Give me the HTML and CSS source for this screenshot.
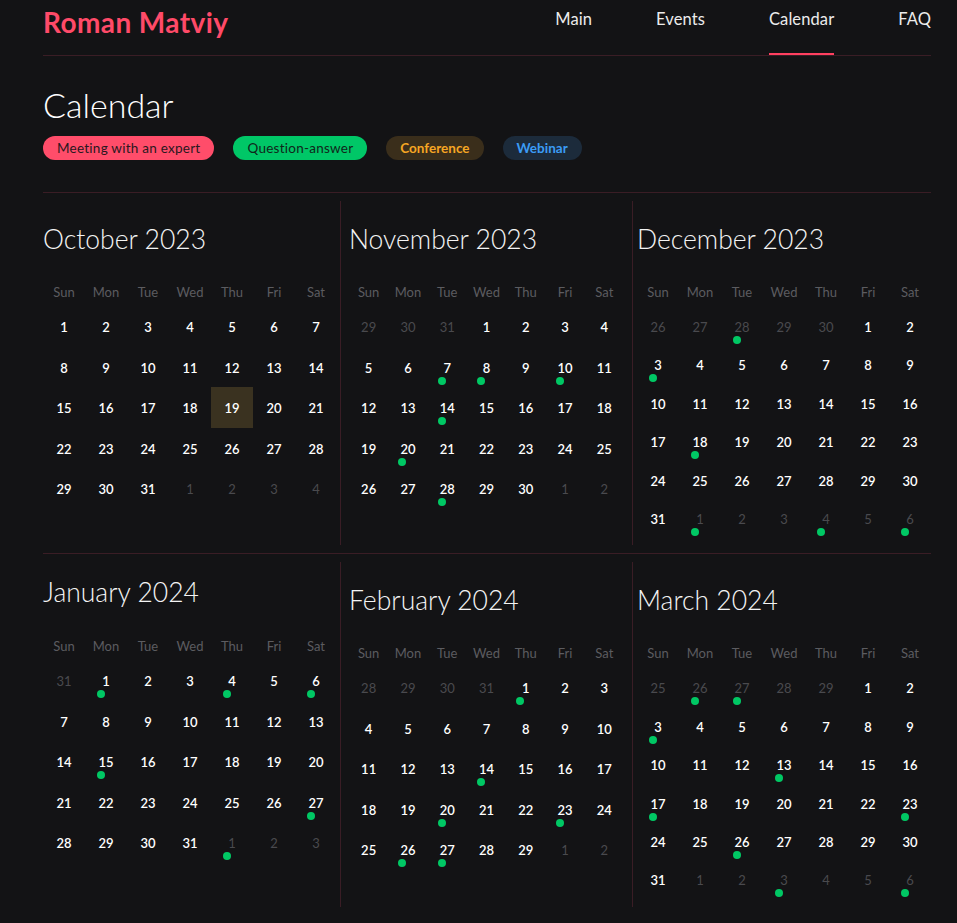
FILE: index.html
```html
<!DOCTYPE html>
<html lang="en">
<head>
<meta charset="utf-8">
<title>Calendar — Roman Matviy</title>
<link rel="stylesheet" href="styles.css">
</head>
<body>
<div class="page">
  <header class="header">
    <a class="logo" href="#">Roman Matviy</a>
    <nav class="nav">
      <a class="nav-link" href="#">Main</a>
      <a class="nav-link" href="#">Events</a>
      <a class="nav-link active" href="#">Calendar</a>
      <a class="nav-link" href="#">FAQ</a>
    </nav>
  </header>

  <h1 class="page-title">Calendar</h1>
  <div class="legend">
    <span class="pill pill-meeting">Meeting with an expert</span>
    <span class="pill pill-qa">Question-answer</span>
    <span class="pill pill-conf">Conference</span>
    <span class="pill pill-web">Webinar</span>
  </div>

  <section class="months-row">
    <div class="month col-first">
      <h2 class="month-title">October 2023</h2>
      <div class="weekdays"><span>Sun</span><span>Mon</span><span>Tue</span><span>Wed</span><span>Thu</span><span>Fri</span><span>Sat</span></div>
      <div class="days">
        <span class="d">1</span><span class="d">2</span><span class="d">3</span><span class="d">4</span><span class="d">5</span><span class="d">6</span><span class="d">7</span>
        <span class="d">8</span><span class="d">9</span><span class="d">10</span><span class="d">11</span><span class="d">12</span><span class="d">13</span><span class="d">14</span>
        <span class="d">15</span><span class="d">16</span><span class="d">17</span><span class="d">18</span><span class="d today">19</span><span class="d">20</span><span class="d">21</span>
        <span class="d">22</span><span class="d">23</span><span class="d">24</span><span class="d">25</span><span class="d">26</span><span class="d">27</span><span class="d">28</span>
        <span class="d">29</span><span class="d">30</span><span class="d">31</span><span class="d o">1</span><span class="d o">2</span><span class="d o">3</span><span class="d o">4</span>
      </div>
    </div>
    <div class="month col-mid">
      <h2 class="month-title">November 2023</h2>
      <div class="weekdays"><span>Sun</span><span>Mon</span><span>Tue</span><span>Wed</span><span>Thu</span><span>Fri</span><span>Sat</span></div>
      <div class="days">
        <span class="d o">29</span><span class="d o">30</span><span class="d o">31</span><span class="d">1</span><span class="d">2</span><span class="d">3</span><span class="d">4</span>
        <span class="d">5</span><span class="d">6</span><span class="d ev">7</span><span class="d ev">8</span><span class="d">9</span><span class="d ev">10</span><span class="d">11</span>
        <span class="d">12</span><span class="d">13</span><span class="d ev">14</span><span class="d">15</span><span class="d">16</span><span class="d">17</span><span class="d">18</span>
        <span class="d">19</span><span class="d ev">20</span><span class="d">21</span><span class="d">22</span><span class="d">23</span><span class="d">24</span><span class="d">25</span>
        <span class="d">26</span><span class="d">27</span><span class="d ev">28</span><span class="d">29</span><span class="d">30</span><span class="d o">1</span><span class="d o">2</span>
      </div>
    </div>
    <div class="month col-last">
      <h2 class="month-title">December 2023</h2>
      <div class="weekdays"><span>Sun</span><span>Mon</span><span>Tue</span><span>Wed</span><span>Thu</span><span>Fri</span><span>Sat</span></div>
      <div class="days six">
        <span class="d o">26</span><span class="d o">27</span><span class="d o ev">28</span><span class="d o">29</span><span class="d o">30</span><span class="d">1</span><span class="d">2</span>
        <span class="d ev">3</span><span class="d">4</span><span class="d">5</span><span class="d">6</span><span class="d">7</span><span class="d">8</span><span class="d">9</span>
        <span class="d">10</span><span class="d">11</span><span class="d">12</span><span class="d">13</span><span class="d">14</span><span class="d">15</span><span class="d">16</span>
        <span class="d">17</span><span class="d ev">18</span><span class="d">19</span><span class="d">20</span><span class="d">21</span><span class="d">22</span><span class="d">23</span>
        <span class="d">24</span><span class="d">25</span><span class="d">26</span><span class="d">27</span><span class="d">28</span><span class="d">29</span><span class="d">30</span>
        <span class="d">31</span><span class="d o ev">1</span><span class="d o">2</span><span class="d o">3</span><span class="d o ev">4</span><span class="d o">5</span><span class="d o ev">6</span>
      </div>
    </div>
  </section>

  <section class="months-row">
    <div class="month col-first month-raised">
      <h2 class="month-title">January 2024</h2>
      <div class="weekdays"><span>Sun</span><span>Mon</span><span>Tue</span><span>Wed</span><span>Thu</span><span>Fri</span><span>Sat</span></div>
      <div class="days">
        <span class="d o">31</span><span class="d ev">1</span><span class="d">2</span><span class="d">3</span><span class="d ev">4</span><span class="d">5</span><span class="d ev">6</span>
        <span class="d">7</span><span class="d">8</span><span class="d">9</span><span class="d">10</span><span class="d">11</span><span class="d">12</span><span class="d">13</span>
        <span class="d">14</span><span class="d ev">15</span><span class="d">16</span><span class="d">17</span><span class="d">18</span><span class="d">19</span><span class="d">20</span>
        <span class="d">21</span><span class="d">22</span><span class="d">23</span><span class="d">24</span><span class="d">25</span><span class="d">26</span><span class="d ev">27</span>
        <span class="d">28</span><span class="d">29</span><span class="d">30</span><span class="d">31</span><span class="d o ev">1</span><span class="d o">2</span><span class="d o">3</span>
      </div>
    </div>
    <div class="month col-mid">
      <h2 class="month-title">February 2024</h2>
      <div class="weekdays"><span>Sun</span><span>Mon</span><span>Tue</span><span>Wed</span><span>Thu</span><span>Fri</span><span>Sat</span></div>
      <div class="days">
        <span class="d o">28</span><span class="d o">29</span><span class="d o">30</span><span class="d o">31</span><span class="d ev">1</span><span class="d">2</span><span class="d">3</span>
        <span class="d">4</span><span class="d">5</span><span class="d">6</span><span class="d">7</span><span class="d">8</span><span class="d">9</span><span class="d">10</span>
        <span class="d">11</span><span class="d">12</span><span class="d">13</span><span class="d ev">14</span><span class="d">15</span><span class="d">16</span><span class="d">17</span>
        <span class="d">18</span><span class="d">19</span><span class="d ev">20</span><span class="d">21</span><span class="d">22</span><span class="d ev">23</span><span class="d">24</span>
        <span class="d">25</span><span class="d ev">26</span><span class="d ev">27</span><span class="d">28</span><span class="d">29</span><span class="d o">1</span><span class="d o">2</span>
      </div>
    </div>
    <div class="month col-last">
      <h2 class="month-title">March 2024</h2>
      <div class="weekdays"><span>Sun</span><span>Mon</span><span>Tue</span><span>Wed</span><span>Thu</span><span>Fri</span><span>Sat</span></div>
      <div class="days six">
        <span class="d o">25</span><span class="d o ev">26</span><span class="d o ev">27</span><span class="d o">28</span><span class="d o">29</span><span class="d">1</span><span class="d">2</span>
        <span class="d ev">3</span><span class="d">4</span><span class="d">5</span><span class="d">6</span><span class="d">7</span><span class="d">8</span><span class="d">9</span>
        <span class="d">10</span><span class="d">11</span><span class="d">12</span><span class="d ev">13</span><span class="d">14</span><span class="d">15</span><span class="d">16</span>
        <span class="d ev">17</span><span class="d">18</span><span class="d">19</span><span class="d">20</span><span class="d">21</span><span class="d">22</span><span class="d ev">23</span>
        <span class="d">24</span><span class="d">25</span><span class="d ev">26</span><span class="d">27</span><span class="d">28</span><span class="d">29</span><span class="d">30</span>
        <span class="d">31</span><span class="d o">1</span><span class="d o">2</span><span class="d o ev">3</span><span class="d o">4</span><span class="d o">5</span><span class="d o ev">6</span>
      </div>
    </div>
  </section>
</div>
</body>
</html>
```

FILE: styles.css
```css
* { box-sizing: border-box; }

html, body {
  margin: 0;
  background: #131315;
  color: #f2f2f2;
  font-family: "Lato", "Noto Sans", "DejaVu Sans", sans-serif;
}

.page {
  width: 888px;
  margin-left: 43px;
  padding-bottom: 18px;
}

/* Header */
.header {
  display: flex;
  justify-content: space-between;
  align-items: stretch;
  height: 56px;
  border-bottom: 1px solid #3a1d25;
}

.logo {
  color: #ff4a68;
  font-weight: 700;
  font-size: 28px;
  line-height: 32px;
  padding-top: 6px;
  text-decoration: none;
  letter-spacing: 0.4px;
}

.nav {
  display: flex;
  gap: 64px;
}

.nav-link {
  color: #ececec;
  text-decoration: none;
  font-size: 16.5px;
  line-height: 20px;
  padding-top: 9px;
  letter-spacing: 0.1px;
  border-bottom: 2px solid transparent;
}

.nav-link.active {
  border-bottom-color: #ff4060;
}

/* Title & legend */
.page-title {
  margin: 29px 0 0;
  font-size: 34px;
  line-height: 40px;
  font-weight: 300;
  color: #ffffff;
}

.legend {
  display: flex;
  gap: 19px;
  margin-top: 11px;
  margin-bottom: 32px;
}

.pill {
  height: 24px;
  line-height: 24px;
  padding: 0 14px;
  border-radius: 12px;
  font-size: 13.5px;
  letter-spacing: 0.25px;
}

.pill-meeting { background: #ff4d6a; color: #2a1820; }
.pill-qa { background: #00c767; color: #10261a; }
.pill-conf { background: #3a2e1b; color: #f6a623; font-weight: 700; letter-spacing: 0; }
.pill-web { background: #1c2b3b; color: #3b9cf5; font-weight: 700; letter-spacing: 0; }

/* Months */
.months-row {
  display: grid;
  grid-template-columns: 297px 293px 298px;
  border-top: 1px solid #3a1d25;
  padding: 8px 0;
}

.month {
  padding-bottom: 9px;
}

.col-first { padding-right: 3px; }
.col-mid {
  padding-left: 8px;
  padding-right: 8px;
  border-left: 1px solid #3a1d25;
  border-right: 1px solid #3a1d25;
}
.col-last { padding-left: 4px; }

.month-title {
  margin: 21px 0 0;
  font-size: 26.5px;
  line-height: 34px;
  font-weight: 300;
  color: #f4f4f4;
}

.month-raised .month-title { margin-top: 13px; }

.weekdays {
  display: grid;
  grid-template-columns: repeat(7, 1fr);
  margin-top: 22px;
  height: 28px;
  align-items: center;
  text-align: center;
  font-size: 13px;
  color: #5c5c60;
}

.month-raised .weekdays { margin-top: 23px; }

.days {
  display: grid;
  grid-template-columns: repeat(7, 1fr);
  grid-auto-rows: 40.5px;
}

.days.six { grid-auto-rows: 38.4px; }

.d {
  position: relative;
  text-align: center;
  padding-top: 13px;
  font-size: 13px;
  line-height: 16px;
  font-weight: 600;
  color: #ffffff;
}

.d.o {
  color: #4a4a4e;
  font-weight: 400;
}

.d.today {
  background: #3a3220;
}

.d.ev::after {
  content: "";
  position: absolute;
  top: 30px;
  left: calc(50% - 9.5px);
  width: 8px;
  height: 8px;
  border-radius: 50%;
  background: #00c864;
}
```
